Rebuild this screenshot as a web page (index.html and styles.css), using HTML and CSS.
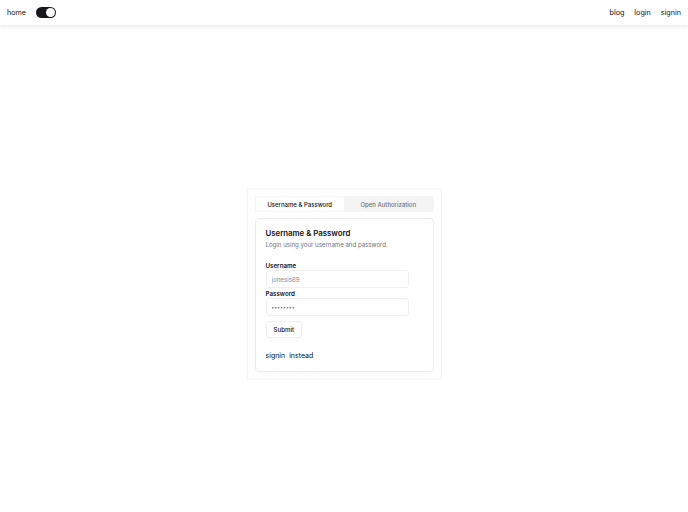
FILE: index.html
```html
<!DOCTYPE html>
<html lang="en">
<head>
  <meta charset="UTF-8">
  <title>Login</title>
  <link rel="stylesheet" href="styles.css">
</head>
<body>
  <header class="topbar">
    <div class="topbar-left">
      <a class="nav-link" href="#">home</a>
      <span class="toggle"><span class="toggle-knob"></span></span>
    </div>
    <nav class="topbar-right">
      <a class="nav-link" href="#">blog</a>
      <a class="nav-link" href="#">login</a>
      <a class="nav-link" href="#">signin</a>
    </nav>
  </header>

  <main class="page">
    <div class="auth-box">
      <div class="tabs">
        <span class="tab tab-active">Username &amp; Password</span>
        <span class="tab">Open Authorization</span>
      </div>

      <form class="card">
        <h2 class="card-title">Username &amp; Password</h2>
        <p class="card-desc">Login using your username and password.</p>

        <label class="field-label">Username</label>
        <input class="field" type="text" placeholder="jonesis69">
        <label class="field-label">Password</label>
        <input class="field field-pass" type="password" value="password">

        <button type="button" class="submit-btn">Submit</button>

        <div class="alt-links">
          <a href="#">signin</a>
          <span>instead</span>
        </div>
      </form>
    </div>
  </main>
</body>
</html>
```

FILE: styles.css
```css
body {
  font-family: Inter, 'Liberation Sans', sans-serif;
  background-color: #ffffff;
  margin: 0;
  color: #111;
}

a {
  color: inherit;
  text-decoration: none;
}

.topbar {
  height: 25px;
  display: flex;
  align-items: center;
  justify-content: space-between;
  padding: 0 7px;
  box-shadow: 0 2px 4px rgba(0, 0, 0, 0.08);
}

.topbar-left {
  display: flex;
  align-items: center;
  gap: 10px;
}

.topbar-right {
  display: flex;
  gap: 10px;
}

.nav-link {
  font-size: 7.2px;
}

.toggle {
  width: 20px;
  height: 11px;
  border-radius: 6px;
  background: #18181b;
  display: flex;
  align-items: center;
  justify-content: flex-end;
  padding: 0 1px;
  box-sizing: border-box;
}

.toggle-knob {
  width: 9px;
  height: 9px;
  border-radius: 50%;
  background: #fff;
}

.page {
  display: flex;
  justify-content: center;
  padding-top: 163px;
}

.auth-box {
  width: 195px;
  box-sizing: border-box;
  border: 1px solid #f4f4f4;
  border-radius: 3px;
  padding: 7px;
  display: flex;
  flex-direction: column;
  gap: 6px;
}

.tabs {
  display: flex;
  background: #f4f4f5;
  border-radius: 3px;
  padding: 1px;
  height: 16px;
  box-sizing: border-box;
}

.tab {
  flex: 1;
  display: flex;
  align-items: center;
  justify-content: center;
  font-size: 6px;
  font-weight: 500;
  color: #71717a;
  border-radius: 2px;
}

.tab-active {
  background: #fff;
  color: #111;
}

.card {
  border: 1px solid #ececec;
  border-radius: 4px;
  padding: 9px 10px 11px;
  display: flex;
  flex-direction: column;
  align-items: flex-start;
  box-shadow: 0 1px 2px rgba(0, 0, 0, 0.03);
}

.card-title {
  font-size: 7.8px;
  font-weight: 600;
  margin: 0;
}

.card-desc {
  font-size: 6.1px;
  color: #71717a;
  margin: 3px 0 14px;
}

.field-label {
  font-size: 6.2px;
  font-weight: 600;
  margin-bottom: 1px;
}

.field {
  width: 143px;
  height: 18px;
  box-sizing: border-box;
  border: 1px solid #f0f0f0;
  border-radius: 3px;
  padding: 0 5px;
  font-family: inherit;
  font-size: 6.2px;
  color: #555;
  margin-bottom: 2px;
}

.field::placeholder {
  color: #8a8a8a;
}

.field-pass {
  font-size: 4.5px;
  letter-spacing: 0.4px;
}

.submit-btn {
  margin-top: 3px;
  height: 17px;
  padding: 0 7px;
  background: #fff;
  border: 1px solid #f0f0f0;
  border-radius: 3px;
  font-family: inherit;
  font-size: 6.2px;
  font-weight: 500;
  color: #111;
}

.alt-links {
  display: flex;
  gap: 4px;
  margin-top: 13px;
  font-size: 7px;
}
```
